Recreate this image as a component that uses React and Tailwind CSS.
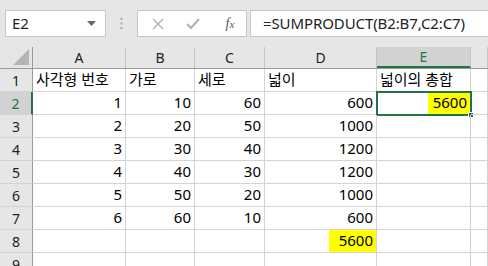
import React from 'react';

const FONT = { fontFamily: '"Noto Sans", "Noto Sans CJK KR", sans-serif' };

const cols = [
  { key: 'A', w: 'w-[93px]' },
  { key: 'B', w: 'w-[69px]' },
  { key: 'C', w: 'w-[70px]' },
  { key: 'D', w: 'w-[112px]' },
  { key: 'E', w: 'w-[94px]' },
  { key: 'F', w: 'flex-1' },
];

const rows = [
  ['사각형 번호', '가로', '세로', '넓이', '넓이의 총합', ''],
  [1, 10, 60, 600, 5600, ''],
  [2, 20, 50, 1000, '', ''],
  [3, 30, 40, 1200, '', ''],
  [4, 40, 30, 1200, '', ''],
  [5, 50, 20, 1000, '', ''],
  [6, 60, 10, 600, '', ''],
  ['', '', '', 5600, '', ''],
  ['', '', '', '', '', ''],
];

function Cell({ value, w, row, col }) {
  const isNum = typeof value === 'number';
  const selected = row === 2 && col === 'E';
  const marked = (row === 2 && col === 'E') || (row === 8 && col === 'D');
  return (
    <div
      className={`${w} relative h-[23px] shrink-0 border-r border-b border-[#d4d4d4] flex items-end ${isNum ? 'justify-end' : 'justify-start'}`}
    >
      {marked ? (
        <span className={`bg-[#ffff00] h-full flex items-end pb-[1px] pr-[3px] ${row === 2 ? 'pl-[5px]' : 'pl-[10px]'}`}>
          {value}
        </span>
      ) : (
        <span className={`pb-[1px] ${isNum ? 'pr-[3px]' : 'pl-[3px]'} whitespace-nowrap`}>{value}</span>
      )}
      {selected && (
        <div className="absolute -left-[1px] -top-[1px] w-[96px] h-[25px] border-2 border-[#217346] pointer-events-none">
          <div className="absolute -right-[4px] -bottom-[4px] w-[6px] h-[6px] bg-[#217346] border border-white" />
        </div>
      )}
    </div>
  );
}

export default function App() {
  return (
    <div className="w-[488px] h-[266px] overflow-hidden bg-white text-[15px] text-black" style={FONT}>
      {/* formula bar */}
      <div className="h-[47px] bg-[#e6e6e6] flex items-start pt-[10px] pl-[5px]">
        <div className="w-[101px] h-[27px] bg-white border border-[#c6c6c6] flex items-center justify-between pl-[6px] pr-[9px]">
          <span className="text-[15px] text-[#222]">E2</span>
          <svg width="9" height="5" viewBox="0 0 9 5"><path d="M0 0h9L4.5 5z" fill="#666" /></svg>
        </div>
        <div className="w-[31px] h-[27px] flex items-center justify-center">
          <svg width="3" height="11" viewBox="0 0 3 11">
            <rect x="0.5" y="0" width="2" height="2" fill="#a8a8a8" />
            <rect x="0.5" y="4.5" width="2" height="2" fill="#a8a8a8" />
            <rect x="0.5" y="9" width="2" height="2" fill="#a8a8a8" />
          </svg>
        </div>
        <div className="w-[110px] h-[27px] bg-white border border-[#c6c6c6] flex items-center">
          <div className="w-[40px] flex justify-center">
            <svg width="12" height="12" viewBox="0 0 12 12">
              <path d="M1 1l10 10M11 1L1 11" stroke="#b0b0b0" strokeWidth="1.4" />
            </svg>
          </div>
          <div className="w-[30px] flex justify-center">
            <svg width="14" height="12" viewBox="0 0 14 12">
              <path d="M1 6l4 4 8-9" stroke="#b0b0b0" strokeWidth="2" fill="none" />
            </svg>
          </div>
          <div className="w-[38px] flex justify-center pl-[6px]">
            <span className="italic text-[14px] text-[#555]" style={{ fontFamily: '"Liberation Serif", serif' }}>
              f<span className="text-[11px]">x</span>
            </span>
          </div>
        </div>
        <div className="ml-[3px] flex-1 h-[27px] bg-white border border-r-0 border-[#c6c6c6] flex items-center pl-[12px]">
          <span className="text-[15px] text-[#222] tracking-[-0.1px]">=SUMPRODUCT(B2:B7,C2:C7)</span>
        </div>
      </div>

      {/* column headers */}
      <div className="flex h-[22px] bg-[#e6e6e6] border-b border-[#9b9b9b]">
        <div className="w-[33px] shrink-0 border-r border-[#9b9b9b] relative">
          <svg className="absolute right-[3px] bottom-[3px]" width="16" height="16" viewBox="0 0 16 16">
            <path d="M16 0v16H0z" fill="#b5b5b5" />
          </svg>
        </div>
        {cols.map((c) => (
          <div
            key={c.key}
            className={`${c.w} shrink-0 flex items-center justify-center text-[14px] border-r border-[#c6c6c6] ${
              c.key === 'E' ? 'bg-[#d2d2d2] text-[#217346] border-b-2 border-b-[#217346]' : 'text-[#222]'
            }`}
          >
            {c.key === 'F' ? '' : c.key}
          </div>
        ))}
      </div>

      {/* rows */}
      {rows.map((r, i) => {
        const rowNum = i + 1;
        return (
          <div key={rowNum} className="flex">
            <div
              className={`w-[33px] h-[23px] shrink-0 flex items-center justify-center text-[14px] border-b border-[#d4d4d4] ${
                rowNum === 2
                  ? 'bg-[#d2d2d2] text-[#217346] border-r-2 border-r-[#217346]'
                  : 'bg-[#e6e6e6] text-[#222] border-r border-r-[#9b9b9b]'
              }`}
            >
              {rowNum}
            </div>
            {cols.map((c, j) => (
              <Cell key={c.key} value={r[j]} w={c.w} row={rowNum} col={c.key} />
            ))}
          </div>
        );
      })}
    </div>
  );
}
